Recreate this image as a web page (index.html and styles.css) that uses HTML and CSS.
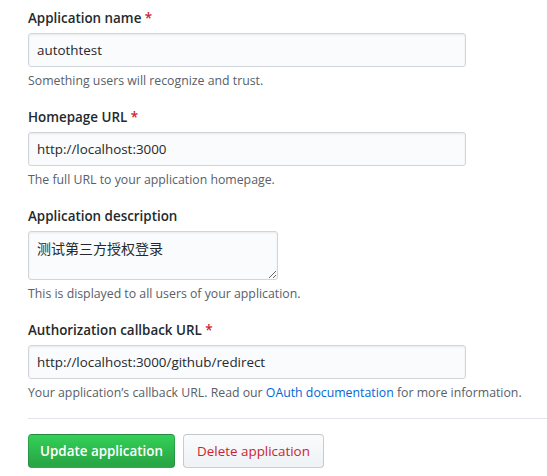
FILE: index.html
```html
<!DOCTYPE html>
<html>
<head>
<meta charset="utf-8">
<link rel="stylesheet" href="styles.css">
</head>
<body>
<form class="app-form">
  <div class="form-group">
    <label class="label">Application name <span class="req">*</span></label>
    <input class="form-control" type="text" value="autothtest">
    <p class="note">Something users will recognize and trust.</p>
  </div>
  <div class="form-group">
    <label class="label">Homepage URL <span class="req">*</span></label>
    <input class="form-control" type="text" value="http://localhost:3000">
    <p class="note">The full URL to your application homepage.</p>
  </div>
  <div class="form-group">
    <label class="label">Application description</label>
    <textarea class="form-control textarea">测试第三方授权登录</textarea>
    <p class="note">This is displayed to all users of your application.</p>
  </div>
  <div class="form-group">
    <label class="label">Authorization callback URL <span class="req">*</span></label>
    <input class="form-control" type="text" value="http://localhost:3000/github/redirect">
    <p class="note">Your application’s callback URL. Read our <a href="#" class="link">OAuth documentation</a> for more information.</p>
  </div>
  <hr class="divider">
  <div class="actions">
    <button type="button" class="btn btn-primary">Update application</button>
    <button type="button" class="btn btn-danger">Delete application</button>
  </div>
</form>
</body>
</html>
```
FILE: styles.css
```css
html, body {
  margin: 0;
  padding: 0;
  background: #ffffff;
}
body {
  font-family: "Open Sans", "Noto Sans", "Noto Sans CJK SC", sans-serif;
  color: #24292e;
  font-size: 14px;
  overflow: hidden;
}
.app-form {
  padding: 8px 0 0 28px;
}
.form-group {
  display: flex;
  flex-direction: column;
  align-items: flex-start;
  margin-bottom: 17px;
}
.label {
  font-size: 13.4px;
  font-weight: 600;
  line-height: 20px;
  margin-bottom: 5px;
}
.req {
  color: #cb2431;
}
.form-control {
  box-sizing: border-box;
  width: 438px;
  height: 34px;
  padding: 6px 8px;
  font-family: "Open Sans", "Noto Sans", "Noto Sans CJK SC", sans-serif;
  font-size: 13.4px;
  line-height: 20px;
  color: #24292e;
  background: #fafbfc;
  border: 1px solid #d1d5da;
  border-radius: 3px;
  box-shadow: inset 0 1px 2px rgba(27, 31, 35, 0.075);
  outline: none;
}
.textarea {
  width: 250px;
  height: 49px;
  resize: both;
  font-size: 14px;
  font-family: "Noto Sans CJK SC", sans-serif;
}
.note {
  margin: 5px 0 0 0;
  font-size: 12.3px;
  line-height: 18px;
  color: #586069;
}
.link {
  color: #0366d6;
  text-decoration: none;
}
.divider {
  margin: -1px 0 15px 0;
  border: 0;
  border-top: 1px solid #e1e4e8;
  height: 0;
}
.actions {
  display: flex;
  gap: 8px;
}
.btn {
  box-sizing: border-box;
  display: flex;
  align-items: center;
  justify-content: center;
  height: 34px;
  padding: 0;
  white-space: nowrap;
  font-family: "Open Sans", "Noto Sans", sans-serif;
  font-size: 13.4px;
  font-weight: 600;
  line-height: 20px;
  border: 1px solid rgba(27, 31, 35, 0.2);
  border-radius: 4px;
}
.btn-primary {
  width: 147px;
  color: #ffffff;
  background: linear-gradient(-180deg, #34d058 0%, #28a745 90%);
}
.btn-danger {
  width: 141px;
  color: #cb2431;
  font-weight: 400;
  background: linear-gradient(-180deg, #fafbfc 0%, #eff3f6 90%);
}
```
